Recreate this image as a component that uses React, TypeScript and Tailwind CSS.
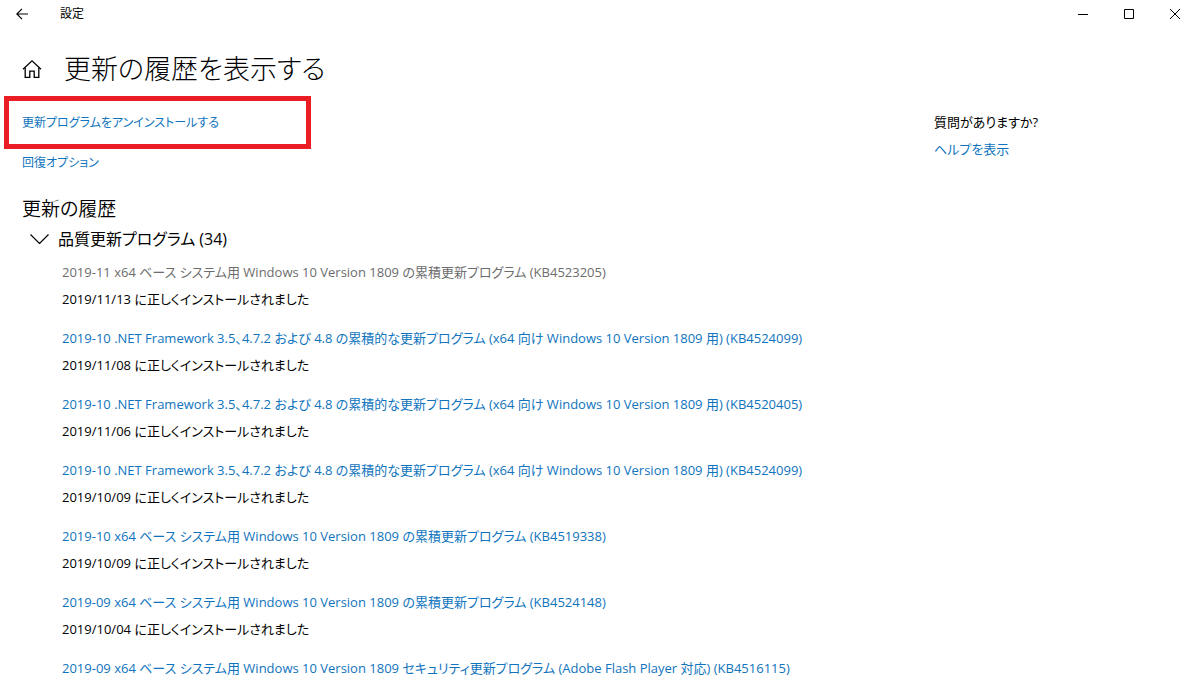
const updates = [
  {
    title: "2019-11 x64 ベース システム用 Windows 10 Version 1809 の累積更新プログラム (KB4523205)",
    date: "2019/11/13",
    disabled: true,
  },
  {
    title:
      "2019-10 .NET Framework 3.5、4.7.2 および 4.8 の累積的な更新プログラム (x64 向け Windows 10 Version 1809 用) (KB4524099)",
    date: "2019/11/08",
  },
  {
    title:
      "2019-10 .NET Framework 3.5、4.7.2 および 4.8 の累積的な更新プログラム (x64 向け Windows 10 Version 1809 用) (KB4520405)",
    date: "2019/11/06",
  },
  {
    title:
      "2019-10 .NET Framework 3.5、4.7.2 および 4.8 の累積的な更新プログラム (x64 向け Windows 10 Version 1809 用) (KB4524099)",
    date: "2019/10/09",
  },
  {
    title: "2019-10 x64 ベース システム用 Windows 10 Version 1809 の累積更新プログラム (KB4519338)",
    date: "2019/10/09",
  },
  {
    title: "2019-09 x64 ベース システム用 Windows 10 Version 1809 の累積更新プログラム (KB4524148)",
    date: "2019/10/04",
  },
  {
    title:
      "2019-09 x64 ベース システム用 Windows 10 Version 1809 セキュリティ更新プログラム (Adobe Flash Player 対応) (KB4516115)",
  },
];

function TitleBar() {
  return (
    <header className="flex h-[27px] items-center justify-between pr-3 pl-4">
      <div className="flex items-center gap-8">
        <button type="button" aria-label="戻る">
          <svg width="12" height="12" viewBox="0 0 12 12" fill="none" stroke="currentColor" strokeWidth="1.2">
            <path d="M12 6H1M6 .8.8 6 6 11.2" />
          </svg>
        </button>
        <span className="text-xs leading-[27px]">設定</span>
      </div>
      <div className="flex items-center gap-9">
        <button type="button" aria-label="最小化">
          <svg width="10" height="10" viewBox="0 0 10 10" stroke="currentColor">
            <path d="M0 5.5h10" />
          </svg>
        </button>
        <button type="button" aria-label="最大化">
          <svg width="10" height="10" viewBox="0 0 10 10" fill="none" stroke="currentColor">
            <path d="M.5.5h9v9h-9z" />
          </svg>
        </button>
        <button type="button" aria-label="閉じる">
          <svg width="10" height="10" viewBox="0 0 10 10" stroke="currentColor">
            <path d="m0 0 10 10M10 0 0 10" />
          </svg>
        </button>
      </div>
    </header>
  );
}

export default function App() {
  return (
    <div className="h-screen overflow-hidden bg-white font-['Open_Sans','Noto_Sans_CJK_JP',sans-serif] text-[13px] leading-[27px] text-black [font-feature-settings:'palt']">
      <TitleBar />

      <div className="flex items-center gap-[22px] pt-[26px] pb-[11px] pl-[22px]">
        <a href="#home" aria-label="ホーム">
          <svg width="20" height="20" viewBox="0 0 20 20" fill="none" stroke="currentColor" strokeWidth="1.3">
            <path d="M1 10.2 10 1.8l9 8.4" />
            <path d="M3.2 8.5v9.8h4.6v-6.1h4.4v6.1h4.6V8.5" />
          </svg>
        </a>
        <h1 className="text-[27px] leading-8 font-light">更新の履歴を表示する</h1>
      </div>

      <div className="flex">
        <main className="min-w-0 flex-1">
          <div className="ml-1 w-[307px] border-5 border-[#ea1c24] px-[13px] py-2">
            <a href="#uninstall" className="block text-xs leading-[27px] text-[#0f74bd]">
              更新プログラムをアンインストールする
            </a>
          </div>
          <div className="pl-[22px] text-xs leading-[27px]">
            <a href="#recovery" className="text-[#0f74bd]">
              回復オプション
            </a>
          </div>

          <h2 className="mt-5 pl-[22px] text-[19px] leading-[27px] font-[350]">更新の履歴</h2>
          <button type="button" className="flex items-center gap-[9px] pl-[30px] text-base leading-8">
            <svg width="19" height="10" viewBox="0 0 19 10" fill="none" stroke="currentColor" strokeWidth="1.2">
              <path d="m.5.5 9 9 9-9" />
            </svg>
            品質更新プログラム (34)
          </button>

          <ul className="flex flex-col gap-3 pt-1 pl-[62px] whitespace-nowrap">
            {updates.map((update, index) => (
              <li key={index}>
                {update.disabled ? (
                  <span className="text-[#6d6d6d]">{update.title}</span>
                ) : (
                  <a href="#update" className="text-[#0f74bd]">
                    {update.title}
                  </a>
                )}
                {update.date ? <p>{update.date} に正しくインストールされました</p> : null}
              </li>
            ))}
          </ul>
        </main>

        <aside className="w-[258px] pt-[13px]">
          <p>質問がありますか?</p>
          <a href="#help" className="text-[#0f74bd]">
            ヘルプを表示
          </a>
        </aside>
      </div>
    </div>
  );
}
